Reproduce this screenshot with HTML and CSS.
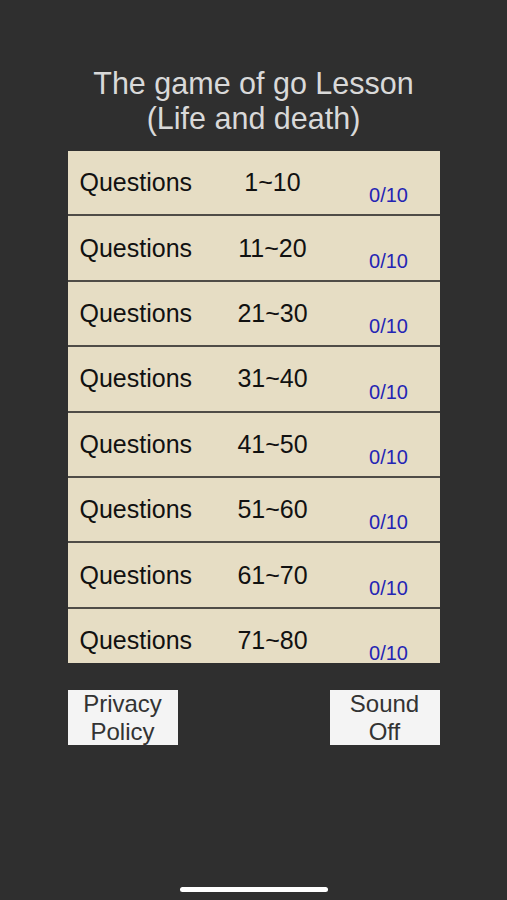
FILE: index.html
```html
<!DOCTYPE html>
<html lang="en">
<head>
    <meta charset="UTF-8">
    <meta name="viewport" content="width=device-width, initial-scale=1.0">
    <title>The game of go Lesson</title>
    <link rel="stylesheet" href="styles.css">
</head>
<body>
    <div class="screen">
        <!-- Title -->
        <h1 class="title">The game of go Lesson<br>(Life and death)</h1>

        <!-- Question sets -->
        <div class="list">
            <div class="row"><span class="label">Questions</span><span class="range">1~10</span><span class="score">0/10</span></div>
            <div class="row"><span class="label">Questions</span><span class="range">11~20</span><span class="score">0/10</span></div>
            <div class="row"><span class="label">Questions</span><span class="range">21~30</span><span class="score">0/10</span></div>
            <div class="row"><span class="label">Questions</span><span class="range">31~40</span><span class="score">0/10</span></div>
            <div class="row"><span class="label">Questions</span><span class="range">41~50</span><span class="score">0/10</span></div>
            <div class="row"><span class="label">Questions</span><span class="range">51~60</span><span class="score">0/10</span></div>
            <div class="row"><span class="label">Questions</span><span class="range">61~70</span><span class="score">0/10</span></div>
            <div class="row"><span class="label">Questions</span><span class="range">71~80</span><span class="score">0/10</span></div>
        </div>

        <!-- Bottom buttons -->
        <div class="buttons">
            <button class="btn">Privacy<br>Policy</button>
            <button class="btn">Sound<br>Off</button>
        </div>

        <div class="home-bar"></div>
    </div>
</body>
</html>
```

FILE: styles.css
```css
/* General Reset */
* {
    margin: 0;
    padding: 0;
    box-sizing: border-box;
}

body {
    font-family: "Liberation Sans", Arial, sans-serif;
    background-color: #2f2f2f;
}

.screen {
    display: flex;
    flex-direction: column;
    align-items: center;
    min-height: 100vh;
}

.title {
    margin-top: 66px;
    font-size: 30.5px;
    font-weight: normal;
    line-height: 35px;
    color: #d9d9d9;
    text-align: center;
    margin-bottom: 15px;
}

.list {
    width: 372px;
    height: 512px; /* clipped scroll area */
    overflow: hidden;
}

.row {
    display: grid;
    grid-template-columns: 128px 130px 102px;
    height: 65.4px;
    padding-left: 12px;
    background-color: #e6ddc4;
    border-bottom: 2px solid #4f4c47;
    color: #111;
    font-size: 25px;
}

.label,
.range {
    align-self: center;
}

.range {
    text-align: center;
}

.score {
    align-self: end;
    text-align: center;
    font-size: 20px;
    color: #2424b4;
    padding-bottom: 7px;
}

.buttons {
    display: flex;
    justify-content: space-between;
    width: 372px;
    margin-top: 27px;
}

.btn {
    width: 110px;
    height: 55px;
    background-color: #f4f4f4;
    border: none;
    color: #333;
    font-family: "Liberation Sans", Arial, sans-serif;
    font-size: 24px;
    line-height: 28px;
}

.home-bar {
    margin-top: auto;
    margin-bottom: 8px;
    width: 148px;
    height: 5px;
    border-radius: 3px;
    background-color: #fff;
}
```
